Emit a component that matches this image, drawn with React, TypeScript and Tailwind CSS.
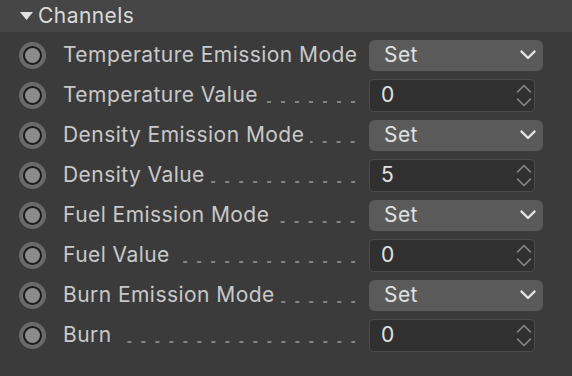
type Row = { label: string; kind: "select" | "number"; value: string };

const ROWS: Row[] = [
  { label: "Temperature Emission Mode", kind: "select", value: "Set" },
  { label: "Temperature Value", kind: "number", value: "0" },
  { label: "Density Emission Mode", kind: "select", value: "Set" },
  { label: "Density Value", kind: "number", value: "5" },
  { label: "Fuel Emission Mode", kind: "select", value: "Set" },
  { label: "Fuel Value", kind: "number", value: "0" },
  { label: "Burn Emission Mode", kind: "select", value: "Set" },
  { label: "Burn", kind: "number", value: "0" },
];

// animation key-frame dot: light rim, dark ring, grey core
function KeyDot() {
  return (
    <div className="flex size-[27px] shrink-0 items-center justify-center rounded-full bg-[#6a6a6a]">
      <div className="size-[19px] rounded-full border-2 border-[#1c1c1c] bg-[#8b8b8b]" />
    </div>
  );
}

function Chevron() {
  return (
    <svg width="16" height="10" viewBox="0 0 16 10" fill="none" stroke="#e6e6e6" strokeWidth="2.4" strokeLinecap="round" strokeLinejoin="round">
      <path d="M1.5 1.5 L8 8 L14.5 1.5" />
    </svg>
  );
}

function Stepper() {
  return (
    <svg width="16" height="23" viewBox="0 0 16 23" fill="none" stroke="#8a8a8a" strokeWidth="1.6" strokeLinecap="round" strokeLinejoin="round">
      <path d="M1.5 8 L8 1.5 L14.5 8" />
      <path d="M1.5 15 L8 21.5 L14.5 15" />
    </svg>
  );
}

function Field({ row }: { row: Row }) {
  if (row.kind === "select") {
    return (
      <div className="flex h-[31px] w-[174px] items-center justify-between rounded-[6px] bg-[#5a5a5a] pl-[15px] pr-[7px] text-[#e2e2e2]">
        <span>{row.value}</span>
        <Chevron />
      </div>
    );
  }
  return (
    <div className="flex h-[33px] w-[166px] items-center justify-between rounded-[5px] border border-[#4b4b4b] bg-[#303030] pl-[11px] pr-[2px] text-[#e2e2e2]">
      <span>{row.value}</span>
      <Stepper />
    </div>
  );
}

export default function App() {
  return (
    <div className="h-[376px] w-[572px] overflow-hidden bg-[#3b3b3b] font-['Inter',sans-serif] text-[21px] tracking-[0.45px] text-[#c9c9c9]">
      <div className="flex h-8 items-center bg-[#464646] pl-[20px] text-[#dadada]">
        <svg width="13" height="8" viewBox="0 0 13 8" className="mr-[5px]">
          <path d="M0 0 H13 L6.5 8 Z" fill="#e0e0e0" />
        </svg>
        <span>Channels</span>
      </div>
      <div className="pt-[3px]">
        {ROWS.map((r) => (
          <div key={r.label} className="flex h-10 items-center pl-[19px]">
            <KeyDot />
            <div className="ml-[17px] flex w-[292px] items-center">
              <span className="whitespace-nowrap">{r.label}</span>
              {/* leader dashes, anchored to the right so they line up row to row */}
              <span className="ml-[6px] mt-[14px] h-[2px] flex-1 bg-[linear-gradient(to_right,transparent_10px,#858585_10px)] bg-[length:14px_2px] bg-right bg-repeat-x" />
            </div>
            <div className="ml-[14px]">
              <Field row={r} />
            </div>
          </div>
        ))}
      </div>
    </div>
  );
}
